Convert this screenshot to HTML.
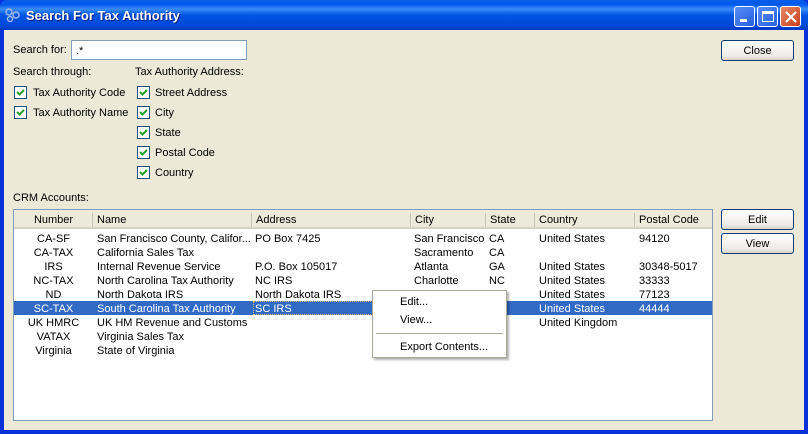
<!DOCTYPE html>
<html><head><style>
*{margin:0;padding:0;box-sizing:border-box}
body{width:808px;height:434px;overflow:hidden;font-family:"Liberation Sans",sans-serif;font-size:11px;color:#000;position:relative;background:#0831d9}
.a{position:absolute;white-space:nowrap}
#title{left:0;top:0;width:808px;height:30px;background:linear-gradient(#0a5fe6,#0058ee 15%,#3a8cf5 30%,#0055e5 50%,#0048d8 85%,#0038c0);border-radius:7px 7px 0 0}
#body{left:4px;top:30px;width:800px;height:400px;background:#ece9d8}
.tb{position:absolute;top:6px;width:21px;height:21px;border:1px solid #fff;border-radius:3px;background:linear-gradient(135deg,#5a8cf8,#2660e0)}
.btn{position:absolute;border:1px solid #003c74;border-radius:3px;background:linear-gradient(#fff,#ecebe6 80%,#d6d0c5);text-align:center;line-height:20px}
.cb{position:absolute;width:13px;height:13px;border:1px solid #1c5180;background:#fff}
.cb svg{position:absolute;left:1px;top:1px}
table{border-collapse:collapse;table-layout:fixed;width:698px}
td{overflow:hidden;white-space:nowrap}
.hd{position:absolute;top:1px;height:19px;line-height:21px;background:#ebeadb;border-bottom:2px solid #d6d3c2}
.hd i{position:absolute;right:0;top:3px;width:1px;height:14px;background:#c7c5b2}
.l{top:1px}
</style></head><body>
<div id="title" class="a"></div>
<svg class="a" style="left:5px;top:8px" width="16" height="14"><circle cx="4" cy="4" r="3" fill="none" stroke="#9fb8e8" stroke-width="1.5"/><circle cx="11" cy="7" r="3" fill="none" stroke="#9fb8e8" stroke-width="1.5"/><circle cx="5" cy="11" r="2.5" fill="none" stroke="#9fb8e8" stroke-width="1.5"/></svg>
<div class="a" style="left:26px;top:8px;color:#fff;font-weight:bold;font-size:13px;text-shadow:1px 1px #0a1e80">Search For Tax Authority</div>
<div class="tb" style="left:734px"><div class="a" style="left:5px;top:12px;width:7px;height:3px;background:#fff"></div></div>
<div class="tb" style="left:757px"><div class="a" style="left:4px;top:4px;width:12px;height:11px;border:1px solid #fff;border-top-width:3px"></div></div>
<div class="tb" style="left:780px;background:linear-gradient(135deg,#e88a6a,#c8401c)"><svg class="a" style="left:4px;top:4px" width="12" height="12"><path d="M1 1L11 11M11 1L1 11" stroke="#fff" stroke-width="2"/></svg></div>
<div id="body" class="a"></div>
<div class="a" style="left:13px;top:44px">Search for:</div>
<div class="a" style="left:71px;top:40px;width:176px;height:20px;border:1px solid #7f9db9;background:#fff;padding:4px 4px">.*</div>
<div class="btn" style="left:721px;top:40px;width:73px;height:21px">Close</div>
<div class="a" style="left:13px;top:66px">Search through:</div>
<div class="a" style="left:135px;top:66px">Tax Authority Address:</div>
<div class="cb" style="left:14px;top:86px"><svg width="9" height="9"><path d="M1 4l2.5 2.5L8 2" stroke="#21a121" stroke-width="2" fill="none"/></svg></div>
<div class="a" style="left:33px;top:87px">Tax Authority Code</div>
<div class="cb" style="left:14px;top:106px"><svg width="9" height="9"><path d="M1 4l2.5 2.5L8 2" stroke="#21a121" stroke-width="2" fill="none"/></svg></div>
<div class="a" style="left:33px;top:107px">Tax Authority Name</div>
<div class="cb" style="left:137px;top:86px"><svg width="9" height="9"><path d="M1 4l2.5 2.5L8 2" stroke="#21a121" stroke-width="2" fill="none"/></svg></div>
<div class="a" style="left:155px;top:87px">Street Address</div>
<div class="cb" style="left:137px;top:106px"><svg width="9" height="9"><path d="M1 4l2.5 2.5L8 2" stroke="#21a121" stroke-width="2" fill="none"/></svg></div>
<div class="a" style="left:155px;top:107px">City</div>
<div class="cb" style="left:137px;top:126px"><svg width="9" height="9"><path d="M1 4l2.5 2.5L8 2" stroke="#21a121" stroke-width="2" fill="none"/></svg></div>
<div class="a" style="left:155px;top:127px">State</div>
<div class="cb" style="left:137px;top:146px"><svg width="9" height="9"><path d="M1 4l2.5 2.5L8 2" stroke="#21a121" stroke-width="2" fill="none"/></svg></div>
<div class="a" style="left:155px;top:147px">Postal Code</div>
<div class="cb" style="left:137px;top:166px"><svg width="9" height="9"><path d="M1 4l2.5 2.5L8 2" stroke="#21a121" stroke-width="2" fill="none"/></svg></div>
<div class="a" style="left:155px;top:167px">Country</div>
<div class="a" style="left:13px;top:192px">CRM Accounts:</div>
<div class="a" style="left:13px;top:209px;width:700px;height:212px;border:1px solid #7f9db9;background:#fff"></div>
<div class="hd" style="left:14px;width:79px;top:210px;text-align:center">Number<i></i></div>
<div class="hd" style="left:93px;width:159px;top:210px;padding-left:4px">Name<i></i></div>
<div class="hd" style="left:252px;width:159px;top:210px;padding-left:4px">Address<i></i></div>
<div class="hd" style="left:411px;width:75px;top:210px;padding-left:4px">City<i></i></div>
<div class="hd" style="left:486px;width:49px;top:210px;padding-left:4px">State<i></i></div>
<div class="hd" style="left:535px;width:100px;top:210px;padding-left:4px">Country<i></i></div>
<div class="hd" style="left:635px;width:77px;top:210px;padding-left:4px">Postal Code</div>
<div class="a" style="left:14px;top:301px;width:698px;height:14px;background:#316ac5"></div>
<div class="a" style="left:253px;top:301px;width:158px;height:14px;border:1px dotted #e8c070"></div>
<div class="a" style="left:14px;top:232px;line-height:14px">
<table>
<colgroup><col style="width:79px"><col style="width:159px"><col style="width:159px"><col style="width:75px"><col style="width:49px"><col style="width:100px"><col style="width:77px"></colgroup>
<tr><td align=center>CA-SF</td><td style="padding-left:4px">San Francisco County, Califor...</td><td style="padding-left:3px">PO Box 7425</td><td style="padding-left:3px">San Francisco</td><td style="padding-left:3px">CA</td><td style="padding-left:4px">United States</td><td style="padding-left:4px">94120</td></tr>
<tr><td align=center>CA-TAX</td><td style="padding-left:4px">California Sales Tax</td><td></td><td style="padding-left:3px">Sacramento</td><td style="padding-left:3px">CA</td><td></td><td></td></tr>
<tr><td align=center>IRS</td><td style="padding-left:4px">Internal Revenue Service</td><td style="padding-left:3px">P.O. Box 105017</td><td style="padding-left:3px">Atlanta</td><td style="padding-left:3px">GA</td><td style="padding-left:4px">United States</td><td style="padding-left:4px">30348-5017</td></tr>
<tr><td align=center>NC-TAX</td><td style="padding-left:4px">North Carolina Tax Authority</td><td style="padding-left:3px">NC IRS</td><td style="padding-left:3px">Charlotte</td><td style="padding-left:3px">NC</td><td style="padding-left:4px">United States</td><td style="padding-left:4px">33333</td></tr>
<tr><td align=center>ND</td><td style="padding-left:4px">North Dakota IRS</td><td style="padding-left:3px">North Dakota IRS</td><td style="padding-left:3px">Bismarck</td><td style="padding-left:3px">ND</td><td style="padding-left:4px">United States</td><td style="padding-left:4px">77123</td></tr>
<tr style="color:#fff"><td align=center>SC-TAX</td><td style="padding-left:4px">South Carolina Tax Authority</td><td style="padding-left:3px">SC IRS</td><td></td><td></td><td style="padding-left:4px">United States</td><td style="padding-left:4px">44444</td></tr>
<tr><td align=center>UK HMRC</td><td style="padding-left:4px">UK HM Revenue and Customs</td><td></td><td></td><td></td><td style="padding-left:4px">United Kingdom</td><td></td></tr>
<tr><td align=center>VATAX</td><td style="padding-left:4px">Virginia Sales Tax</td><td></td><td></td><td></td><td></td><td></td></tr>
<tr><td align=center>Virginia</td><td style="padding-left:4px">State of Virginia</td><td></td><td></td><td></td><td></td><td></td></tr>
</table></div>
<div class="a" style="left:372px;top:290px;width:135px;height:68px;background:#fff;border:1px solid #aca899;box-shadow:2px 2px 2px rgba(0,0,0,.3)">
<div class="a" style="left:27px;top:5px">Edit...</div>
<div class="a" style="left:27px;top:23px">View...</div>
<div class="a" style="left:3px;top:42px;width:127px;height:1px;background:#aca899"></div>
<div class="a" style="left:27px;top:50px">Export Contents...</div>
</div>
<div class="btn" style="left:721px;top:209px;width:73px;height:21px">Edit</div>
<div class="btn" style="left:721px;top:233px;width:73px;height:21px">View</div>
</body></html>
